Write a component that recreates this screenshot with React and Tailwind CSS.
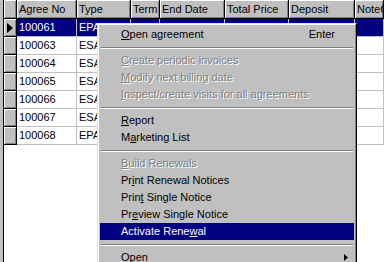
import React from "react";

const columns = [
  { title: "Agree No", w: "w-[60px]" },
  { title: "Type", w: "w-[54px]" },
  { title: "Term", w: "w-[29px]" },
  { title: "End Date", w: "w-[65px]" },
  { title: "Total Price", w: "w-[64px]" },
  { title: "Deposit", w: "w-[66px]" },
  { title: "NoteComment", w: "flex-1" },
];

const rows = [
  ["100061", "EPA"],
  ["100063", "ESA"],
  ["100064", "ESA"],
  ["100065", "ESA"],
  ["100066", "ESA"],
  ["100067", "ESA"],
  ["100068", "EPA"],
];

// label with one underlined access key: [before, key, after]
const menu = [
  { label: ["", "O", "pen agreement"], shortcut: "Enter" },
  { sep: true },
  { label: ["", "C", "reate periodic invoices"], disabled: true },
  { label: ["", "M", "odify next billing date"], disabled: true },
  { label: ["", "I", "nspect/create visits for all agreements"], disabled: true },
  { sep: true },
  { label: ["", "R", "eport"] },
  { label: ["M", "a", "rketing List"] },
  { sep: true },
  { label: ["", "B", "uild Renewals"], disabled: true },
  { label: ["Pr", "i", "nt Renewal Notices"] },
  { label: ["Prin", "t", " Single Notice"] },
  { label: ["Pr", "e", "view Single Notice"] },
  { label: ["Activate Rene", "w", "al"], active: true },
  { sep: true },
  { label: ["", "O", "pen"], submenu: true },
];

const HeaderCell = ({ children, className }) => (
  <div
    className={`${className} h-full shrink-0 border-r border-black bg-[#c0c0c0] pl-[2px] flex items-center overflow-hidden whitespace-nowrap shadow-[inset_1px_1px_0_#fff,inset_-1px_-1px_0_#808080]`}
  >
    {children}
  </div>
);

const ContextMenu = () => (
  <div className="absolute left-[97px] top-[23px] w-[260px] border border-t-[#dfdfdf] border-l-[#dfdfdf] border-r-black border-b-black bg-[#c0c0c0]">
    <div className="border border-t-white border-l-white border-r-[#808080] border-b-[#808080] p-px">
      {menu.map((item, i) =>
        item.sep ? (
          <div key={i} className="h-[9px] flex flex-col justify-center px-px">
            <div className="border-t border-[#808080]" />
            <div className="border-t border-white" />
          </div>
        ) : (
          <div
            key={i}
            className={`h-[17px] flex items-center justify-between pl-[21px] pr-[19px] whitespace-nowrap relative ${
              item.active ? "bg-[#000080] text-white" : item.disabled ? "text-[#808080] [text-shadow:1px_1px_0_#fff]" : "text-black"
            }`}
          >
            <span>
              {item.label[0]}
              <span className="underline underline-offset-[1px]">{item.label[1]}</span>
              {item.label[2]}
            </span>
            {item.shortcut && <span>{item.shortcut}</span>}
            {item.submenu && (
              <svg className="absolute right-[6px] top-[5px]" width="4" height="7" viewBox="0 0 4 7">
                <path d="M0 0 L4 3.5 L0 7 Z" fill="#000" />
              </svg>
            )}
          </div>
        )
      )}
    </div>
  </div>
);

export default function App() {
  return (
    <div className="w-[384px] h-[262px] relative overflow-hidden bg-[#c0c0c0] font-['Liberation_Sans',Arial,sans-serif] text-[11px] text-black leading-none">
      <div className="ml-[3px] h-full border-l border-black bg-white flex flex-col">
        {/* header */}
        <div className="h-[19px] flex border-b border-black shrink-0">
          <HeaderCell className="w-[13px]" />
          {columns.map((c) => (
            <HeaderCell key={c.title} className={c.w}>
              {c.title}
            </HeaderCell>
          ))}
        </div>

        {/* rows */}
        {rows.map((r, i) => {
          const selected = i === 0;
          return (
            <div key={r[0]} className="h-[18px] flex shrink-0">
              <div className="w-[13px] h-full shrink-0 border-r border-b border-black bg-[#c0c0c0] shadow-[inset_1px_1px_0_#fff,inset_-1px_-1px_0_#808080] flex items-center justify-center">
                {selected && (
                  <svg width="6" height="10" viewBox="0 0 6 10">
                    <path d="M0 0 L6 5 L0 10 Z" fill="#000" />
                  </svg>
                )}
              </div>
              {columns.map((c, j) => (
                <div
                  key={c.title}
                  className={`${c.w} h-full shrink-0 border-r border-b border-[#c0c0c0] pl-[2px] flex items-center overflow-hidden whitespace-nowrap ${
                    selected ? "bg-[#000080] text-white" : ""
                  }`}
                >
                  {j < 2 ? r[j] : ""}
                </div>
              ))}
            </div>
          );
        })}
      </div>

      <ContextMenu />
    </div>
  );
}
